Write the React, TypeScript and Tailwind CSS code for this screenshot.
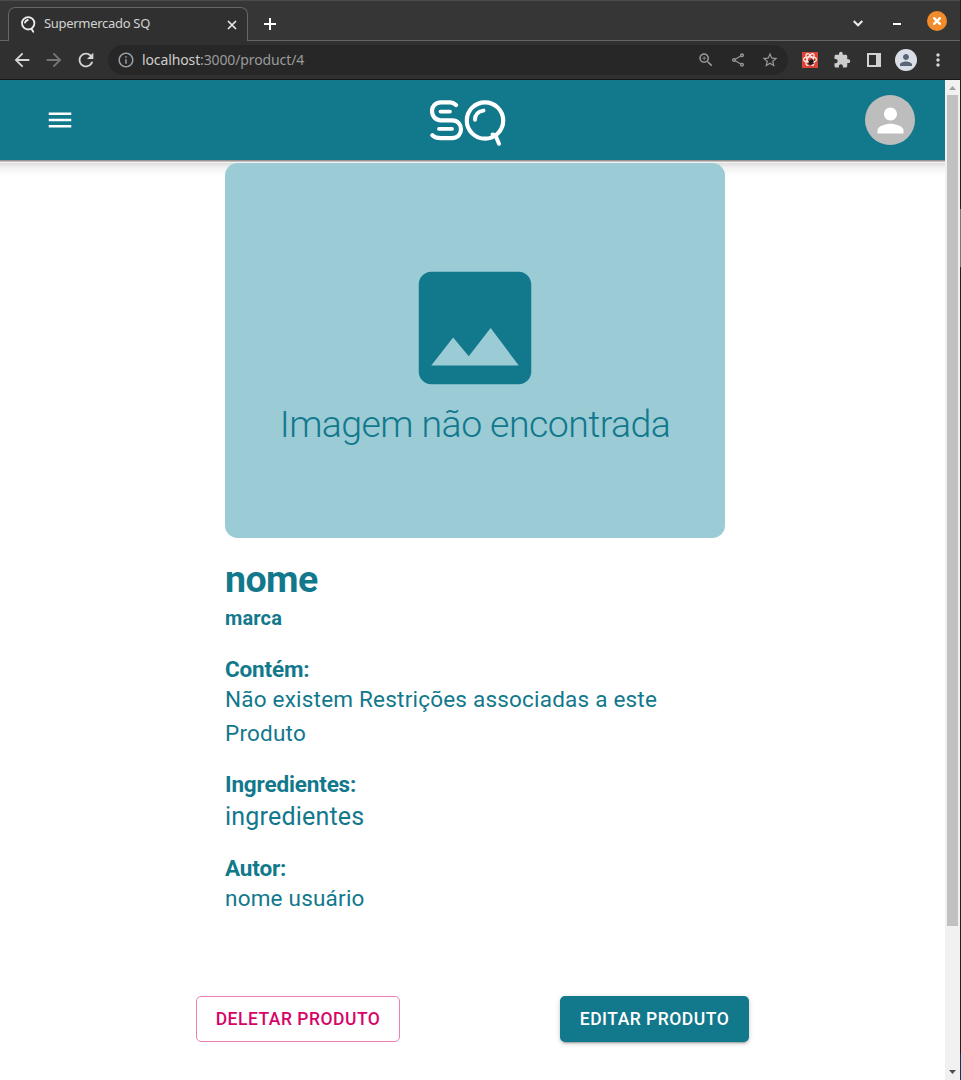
import type { ReactNode } from 'react';
import {
  MdArrowBack,
  MdArrowForward,
  MdExtension,
  MdImage,
  MdInfoOutline,
  MdMenu,
  MdMoreVert,
  MdOutlineShare,
  MdPerson,
  MdRefresh,
  MdStarBorder,
  MdZoomIn,
} from 'react-icons/md';

function TabBar() {
  return (
    <div className="flex h-[41px] shrink-0 items-end border-t border-[#4b4b4b] bg-[#363636]">
      <div className="h-px w-2 bg-[#666]" />
      <div className="flex h-[34px] w-[240px] items-center rounded-t-[7px] border border-b-0 border-[#666] bg-[#303030] pl-3 pr-[10px]">
        <svg width="15" height="17" viewBox="0 0 15 17" fill="none" stroke="#eee" strokeWidth="1.8" strokeLinecap="round">
          <circle cx="7.2" cy="7.3" r="6.2" />
          <path d="M10.600 13l1.600 2.800M4 6.600A3.800 3.800 0 0 1 6.800 4" />
        </svg>
        <span className="ml-2 flex-1 whitespace-nowrap pb-px text-[13px] tracking-[-0.3px] text-[#d3d3d3]">Supermercado SQ</span>
        <svg width="10" height="10" viewBox="0 0 10 10" stroke="#e8e8e8" strokeWidth="1.7">
          <path d="M1 1l8 8M9 1l-8 8" />
        </svg>
      </div>
      <div className="flex h-full flex-1 items-center border-b border-[#666] pl-4">
        <svg className="mt-[6px]" width="12" height="12" viewBox="0 0 12 12" stroke="#fff" strokeWidth="2">
          <path d="M6 0v12M0 6h12" />
        </svg>
        <div className="flex-1" />
        <svg className="mr-[30px] mt-[6px]" width="10" height="7" viewBox="0 0 10 7" fill="none" stroke="#eee" strokeWidth="2">
          <path d="M.7 1L5 5.300 9.300 1" />
        </svg>
        <div className="mr-[26px] mt-[6px] h-[2px] w-2 bg-white" />
        <div className="mr-[13px] flex h-5 w-5 items-center justify-center rounded-full bg-[#f28b2c]">
          <svg width="8" height="8" viewBox="0 0 8 8" stroke="#fff" strokeWidth="2.400">
            <path d="M.4.4l7.200 7.200M7.600.4L.4 7.600" />
          </svg>
        </div>
      </div>
    </div>
  );
}

function Extension() {
  return (
    <svg width="16" height="16" viewBox="0 0 16 16" fill="none">
      <path fill="#db4437" d="M0 0h16v16H0z" />
      <g stroke="#ffe9e5" strokeWidth="1.2">
        <ellipse cx="8" cy="7.500" rx="6.500" ry="2.600" />
        <ellipse cx="8" cy="7.500" rx="6.500" ry="2.600" transform="rotate(60 8 7.500)" />
        <ellipse cx="8" cy="7.500" rx="6.500" ry="2.600" transform="rotate(120 8 7.500)" />
      </g>
      <ellipse cx="9" cy="10.200" rx="2.200" ry="3" fill="#251a1a" transform="rotate(35 9 10.200)" />
      <path stroke="#251a1a" strokeWidth=".8" d="M6 8.500l6.500 3.500M6 12.500l7-4.500M10 6.500l.500 2" />
    </svg>
  );
}

function AddressBar() {
  return (
    <div className="flex h-[39px] shrink-0 items-center border-b border-[#161616] bg-[#303030] pl-[11px]">
      <MdArrowBack className="size-[22px] shrink-0 text-[#d6d6d6]" />
      <MdArrowForward className="ml-[10px] size-[22px] shrink-0 text-[#777]" />
      <MdRefresh className="ml-[10px] size-[22px] shrink-0 text-[#d6d6d6]" />
      <div className="ml-[11px] flex h-[30px] w-[680px] shrink-0 items-center rounded-full bg-[#272727] px-[9px] text-[#9a9a9a]">
        <MdInfoOutline className="size-[18px] text-[#9aa0a6]" />
        <span className="ml-[7px] flex-1 whitespace-nowrap pb-[2px] text-[14px] tracking-[-0.12px]">
          <span className="text-[#cecece]">localhost</span>:3000/product/4
        </span>
        <MdZoomIn className="size-[18px]" />
        <MdOutlineShare className="ml-[15px] size-4" />
        <MdStarBorder className="ml-[15px] size-[18px]" />
      </div>
      <div className="ml-[14px]">
        <Extension />
      </div>
      <MdExtension className="ml-[15px] size-[18px] text-[#ccc]" />
      <svg className="ml-4" width="14" height="14" viewBox="0 0 14 14">
        <path fill="#d2d2d2" fillRule="evenodd" d="M0 0h14v14H0zM2 2h7v10H2z" />
      </svg>
      <div className="ml-[14px] flex size-[22px] items-center justify-center rounded-full bg-[#dadfe7]">
        <MdPerson className="size-[18px] text-[#5a6478]" />
      </div>
      <MdMoreVert className="ml-[11px] size-5 text-[#d6d6d6]" />
    </div>
  );
}

function Logo() {
  return (
    <svg width="76" height="47" viewBox="0 0 76 47" fill="none" stroke="#fff" strokeWidth="4.200" strokeLinecap="round" strokeLinejoin="round">
      <path d="M26 5C23.500 2.700 22 2.400 20 2.400H11C-1.200 2.400-.7 20.300 11 20.300H22C34 20.300 34 38.200 22 38.200H11C6.500 38.200 4.500 37.500 2.400 35.300" />
      <path d="M10.500 11.600h9.500M9 28.900h13" strokeWidth="3.800" />
      <circle cx="55" cy="20.500" r="18.200" />
      <path d="M45 19.700C45 14.500 48.500 11.400 53.500 10.600M62.500 34.500L65.400 35.200 69 43.800" strokeWidth="4" />
    </svg>
  );
}

function Header() {
  return (
    <header className="shrink-0">
      <div className="flex h-20 items-center bg-[#12788c] pl-[45px] pr-[30px]">
        <div className="flex-1">
          <MdMenu className="size-[30px] text-white" />
        </div>
        <div className="mr-6 mt-[6px]">
          <Logo />
        </div>
        <div className="flex flex-1 justify-end">
          <div className="flex size-[50px] items-center justify-center rounded-full bg-[#bdbdbd]">
            <MdPerson className="size-[39px] text-white" />
          </div>
        </div>
      </div>
      <div className="h-px bg-[#9b9391]" />
      <div className="h-px bg-[#c1bfbe]" />
      <div className="h-px bg-[#f3f3f3]" />
    </header>
  );
}

function Field({ label, className, children }: { label: string; className: string; children: ReactNode }) {
  return (
    <section className={className}>
      <h3 className="text-[22.5px] font-bold leading-[27px] tracking-[-0.16px]">{label}</h3>
      {children}
    </section>
  );
}

function Product() {
  return (
    <main className="flex-1 overflow-hidden bg-[linear-gradient(#dedede,#f2f2f2_5px,#fff_13px)] text-[#12788c]">
      <div className="ml-[225px] w-[500px]">
        <div className="flex h-[375px] flex-col items-center rounded-[12.5px] bg-[#9bccd6] pt-[90px]">
          <MdImage className="size-[150px]" />
          <p className="-mt-px whitespace-nowrap text-[37.5px] font-light leading-[45px] tracking-[-0.586px]">Imagem não encontrada</p>
        </div>
        <h1 className="mt-[19px] text-[37.5px] font-bold leading-[45px] tracking-[-0.586px]">nome</h1>
        <h2 className="text-[20px] font-bold leading-8 tracking-[0.15px]">marca</h2>
        <Field label="Contém:" className="mt-[22px]">
          <p className="text-[22.5px] leading-[33.75px] tracking-[0.211px]">Não existem Restrições associadas a este Produto</p>
        </Field>
        <Field label="Ingredientes:" className="mt-[20px]">
          <p className="text-[25px] leading-[37.5px] tracking-[0.2px]">ingredientes</p>
        </Field>
        <Field label="Autor:" className="mt-[20px]">
          <p className="text-[22.5px] leading-[33.75px] tracking-[0.211px]">nome usuário</p>
        </Field>
      </div>
      <div className="ml-[196px] mt-[80px] flex gap-40 text-[17.5px] font-medium tracking-[0.5px]">
        <button className="h-[46px] w-[204px] whitespace-nowrap rounded-[5px] border border-[#ec7fb4] text-[#d70468]">DELETAR PRODUTO</button>
        <button className="h-[46px] w-[189px] whitespace-nowrap rounded-[5px] bg-[#12788c] text-white shadow-[0_4px_1px_-3px_rgba(0,0,0,0.2),0_2px_3px_0_rgba(0,0,0,0.14),0_1px_6px_0_rgba(0,0,0,0.12)]">EDITAR PRODUTO</button>
      </div>
    </main>
  );
}

function Scrollbar() {
  return (
    <div className="flex w-[15px] shrink-0 flex-col items-center bg-[#f1f1f1]">
      <svg className="shrink-0" width="15" height="15" viewBox="0 0 15 15">
        <path d="M4 10h7L7.500 6z" fill="#a0a0a0" />
      </svg>
      <div className="h-[831px] w-[11px] bg-[#c1c1c1]" />
      <div className="flex-1" />
      <svg className="shrink-0" width="15" height="15" viewBox="0 0 15 15">
        <path d="M4 5h7L7.500 9z" fill="#505050" />
      </svg>
    </div>
  );
}

export default function App() {
  return (
    <div className="flex h-[1080px] w-[961px] bg-[#202020]">
      <div className="flex w-[960px] flex-col font-['Noto_Sans',sans-serif]">
        <TabBar />
        <AddressBar />
        <div className="flex min-h-0 flex-1 font-['Roboto',sans-serif]">
          <div className="flex min-w-0 flex-1 flex-col">
            <Header />
            <Product />
          </div>
          <Scrollbar />
        </div>
      </div>
      <div className="flex flex-1 flex-col">
        <div className="h-[209px]" />
        <div className="h-[58px] bg-[#777]" />
        <div className="flex-1" />
        <div className="h-[26px] bg-[#07395c]" />
      </div>
    </div>
  );
}
